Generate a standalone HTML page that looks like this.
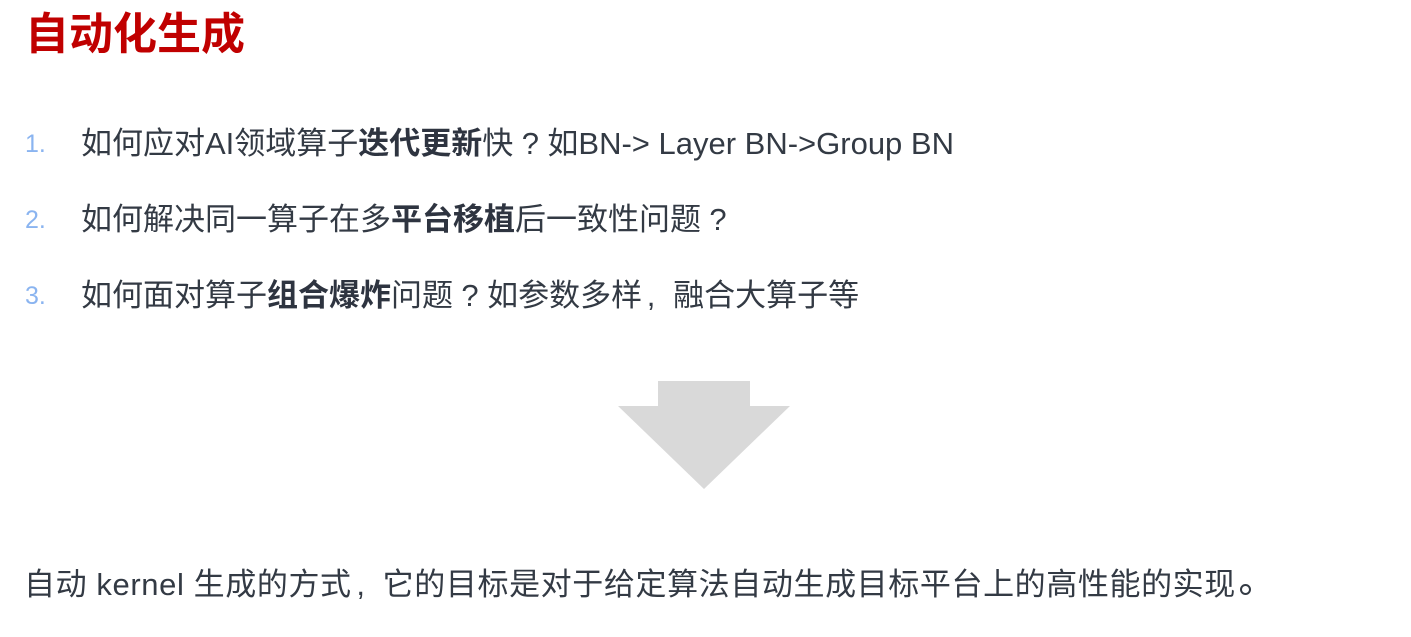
<!DOCTYPE html>
<html><head><meta charset="utf-8"><style>
body{margin:0;width:1411px;height:637px;background:#fff;position:relative;overflow:hidden;font-family:"Liberation Sans","Noto Sans CJK SC",sans-serif;}
.t{position:absolute;left:25px;top:5px;font-size:44px;font-weight:bold;color:#c00000;line-height:60px;}
.l{position:absolute;left:81px;font-size:31px;color:#333a44;line-height:40px;white-space:nowrap;}
.n{position:absolute;left:25px;font-size:25px;color:#8ab4f0;line-height:40px;}
b{font-weight:bold;color:#2e3440;}
.q{display:inline-block;width:1.1em;text-align:center;}
.c{display:inline-block;width:1em;text-indent:0.15em;}
.o{display:inline-block;width:7px;height:7px;border:2px solid #333a44;border-radius:50%;margin-left:4px;}
.f{position:absolute;left:24px;top:565px;font-size:31px;color:#333a44;line-height:40px;white-space:nowrap;letter-spacing:0.6px;}
</style></head><body>
<div class="t">自动化生成</div>
<div class="n" style="top:124px">1.</div>
<div class="l" style="top:124px">如何应对AI领域算子<b>迭代更新</b>快<span class="q">?</span>如BN-&gt; Layer BN-&gt;Group BN</div>
<div class="n" style="top:200px">2.</div>
<div class="l" style="top:200px">如何解决同一算子在多<b>平台移植</b>后一致性问题<span class="q">?</span></div>
<div class="n" style="top:276px">3.</div>
<div class="l" style="top:276px">如何面对算子<b>组合爆炸</b>问题<span class="q">?</span>如参数多样<span class="c">,</span>融合大算子等</div>
<svg style="position:absolute;left:0;top:0" width="1411" height="637"><polygon points="658,381 750,381 750,406 790,406 704,489 618,406 658,406" fill="#d9d9d9"/></svg>
<div class="f">自动 kernel 生成的方式<span class="c">,</span>它的目标是对于给定算法自动生成目标平台上的高性能的实现<span class="o"></span></div>
</body></html>
